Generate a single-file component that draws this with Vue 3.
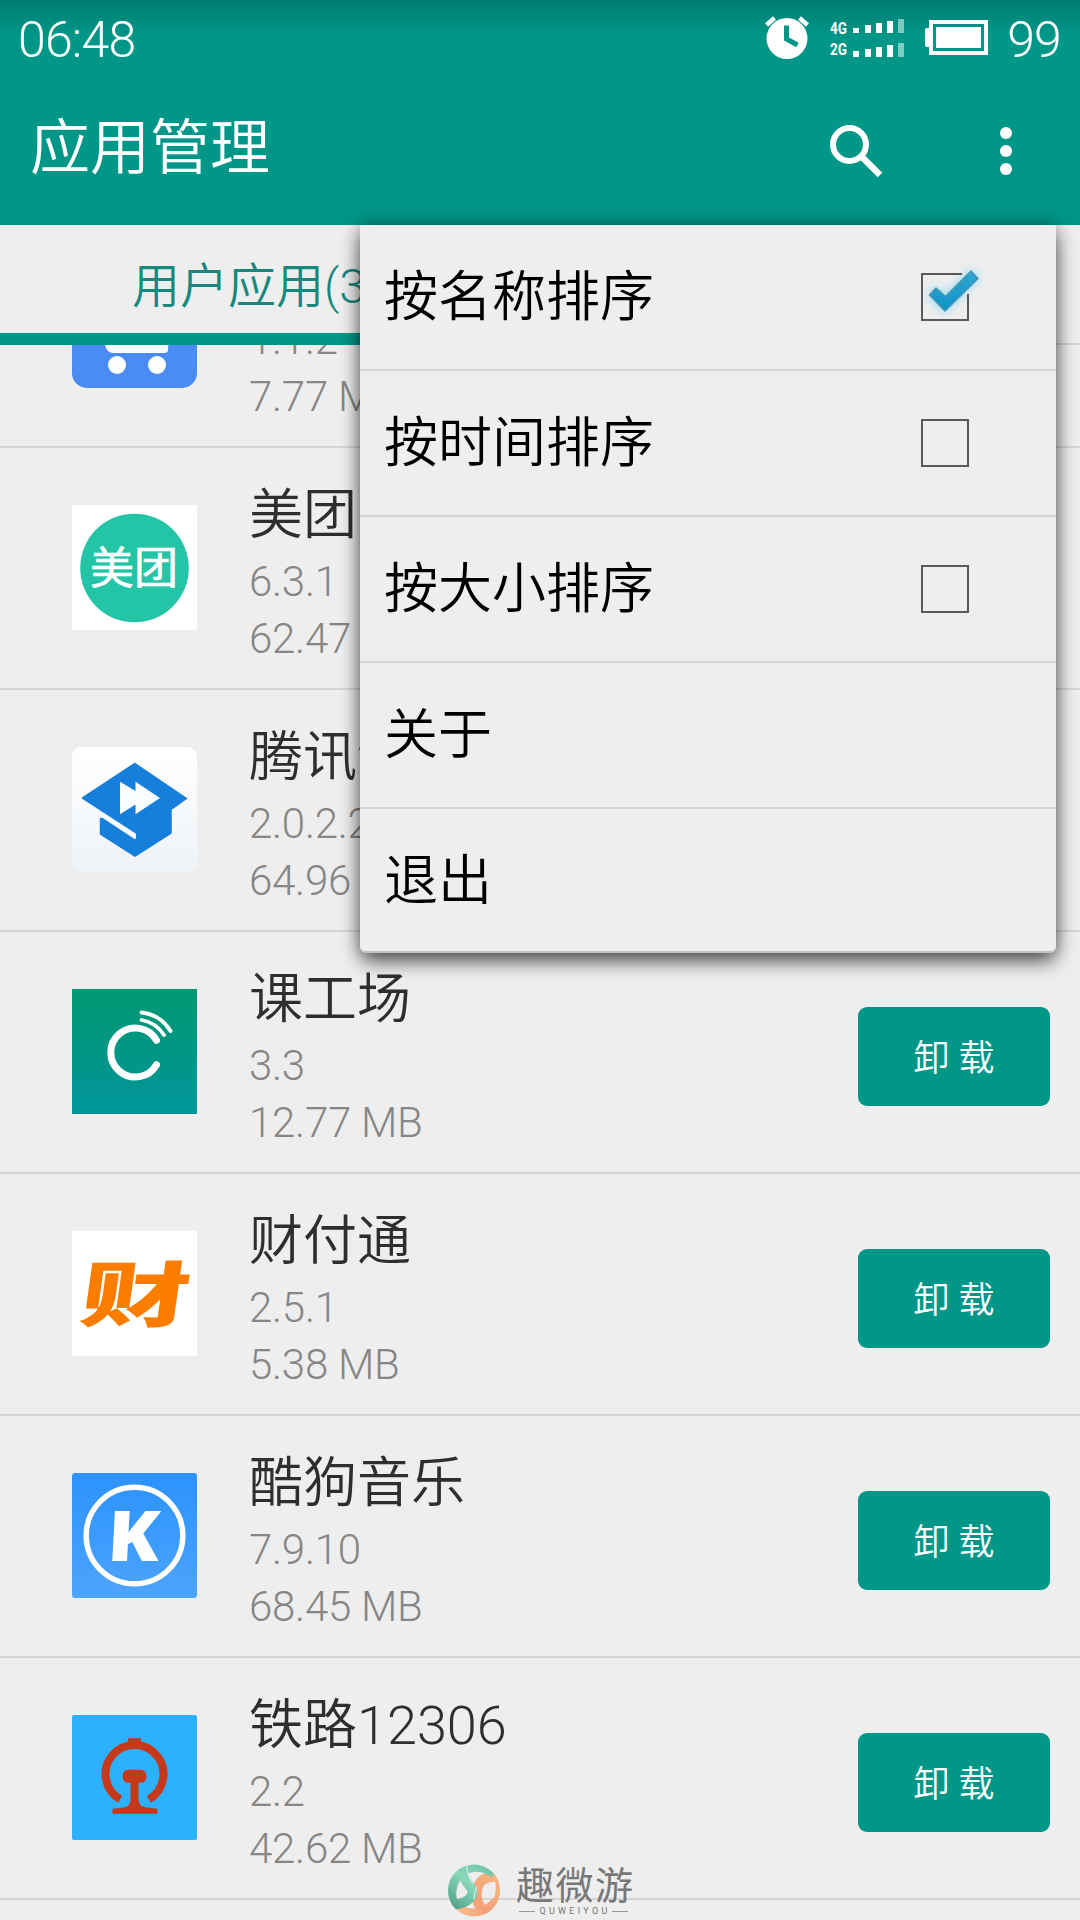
<script setup>
const apps = [
  { icon: 'cart', name: '', version: '1.1.2', size: '7.77 MB' },
  { icon: 'meituan', name: '美团', version: '6.3.1', size: '62.47 MB' },
  { icon: 'classroom', name: '腾讯课堂', version: '2.0.2.2', size: '64.96 MB' },
  { icon: 'kgc', name: '课工场', version: '3.3', size: '12.77 MB' },
  { icon: 'tenpay', name: '财付通', version: '2.5.1', size: '5.38 MB' },
  { icon: 'kugou', name: '酷狗音乐', version: '7.9.10', size: '68.45 MB' },
  { icon: 'railway', name: '铁路12306', version: '2.2', size: '42.62 MB' },
  { icon: '', name: '', version: '', size: '' },
]

const menu = [
  { label: '按名称排序', checkable: true, checked: true },
  { label: '按时间排序', checkable: true, checked: false },
  { label: '按大小排序', checkable: true, checked: false },
  { label: '关于' },
  { label: '退出' },
]
</script>

<template>
  <div class="screen">
    <header class="header">
      <div class="status">
        <span class="clock">06:48</span>
        <div class="status-icons">
          <svg class="alarm" width="46" height="46" viewBox="0 0 46 46">
            <path d="M2.5 10 10.5 3M35.500 3 43.500 10" stroke="#fff" stroke-width="4.500" />
            <circle cx="23" cy="23.500" r="20.500" fill="#fff" />
            <path d="M22.500 10.500V24L33.500 30" fill="none" stroke="#009688" stroke-width="5" />
          </svg>
          <svg class="signal" width="76" height="44" viewBox="0 0 76 44">
            <text class="net" x="0" y="18" textLength="17" lengthAdjust="spacingAndGlyphs">4G</text>
            <text class="net" x="0" y="39" textLength="17" lengthAdjust="spacingAndGlyphs">2G</text>
            <g fill="#fff">
              <path d="M23 12h6v5h-6zM35 9h6v8h-6zM46 7h6v10h-6zM57 5h6v12h-6z" />
              <path d="M23 35h6v6h-6zM35 33h6v8h-6zM46 31h6v10h-6zM57 29h6v12h-6z" />
              <path opacity=".5" d="M68 3h6v14h-6zM68 27h6v14h-6z" />
            </g>
          </svg>
          <svg class="battery" width="64" height="36" viewBox="0 0 64 36">
            <rect x="6" y="2" width="55" height="31" fill="none" stroke="#fff" stroke-width="4" />
            <path d="M0 10q0-2 2-2h3v19H2q-2 0-2-2zM11 7h45v21H11z" fill="#fff" />
          </svg>
          <span class="percent">99</span>
        </div>
      </div>
      <div class="toolbar">
        <h1 class="title">应用管理</h1>
        <svg class="search" width="54" height="54" viewBox="0 0 54 54" fill="none" stroke="#fff">
          <circle cx="20.500" cy="20.500" r="16.500" stroke-width="6" />
          <path d="M34 34 51 51" stroke-width="6.500" />
        </svg>
        <svg class="more" width="12" height="48" viewBox="0 0 12 48" fill="#fff">
          <circle cx="6" cy="6" r="6" /><circle cx="6" cy="24" r="6" /><circle cx="6" cy="42" r="6" />
        </svg>
      </div>
    </header>

    <nav class="tabs">
      <div class="tab active">用户应用(32)</div>
      <div class="tab"></div>
    </nav>

    <main class="list">
      <div v-for="(app, i) in apps" :key="i" class="row">
        <svg class="icon" width="125" height="125" viewBox="0 0 125 125">
          <template v-if="app.icon === 'cart'">
            <rect width="125" height="125" rx="15" fill="#4a8bf4" />
            <path d="M28 60h70l-2 27q0 3-4 3H41q-6 0-8-8z" fill="#fff" />
            <circle cx="45" cy="102" r="9" fill="#fff" />
            <circle cx="85" cy="102" r="9" fill="#fff" />
          </template>
          <template v-else-if="app.icon === 'meituan'">
            <rect width="125" height="125" rx="1" fill="#fff" />
            <circle cx="62.500" cy="63" r="54.300" fill="#24c5a6" />
            <text class="meituan" x="18" y="79" textLength="88">美团</text>
          </template>
          <template v-else-if="app.icon === 'classroom'">
            <defs>
              <linearGradient id="paper" x1="0" y1="0" x2="0" y2="1">
                <stop offset="0" stop-color="#fff" /><stop offset="1" stop-color="#eef3f8" />
              </linearGradient>
            </defs>
            <rect width="125" height="125" rx="9" fill="url(#paper)" />
            <path
              d="M10.500 51 63 16.500 114.500 51.500 99 62.500V86L63 109 28.500 87V72L30 71.500 62.500 93 64.500 92V86z"
              fill="#167fdb" stroke="#167fdb" stroke-width="1.500" stroke-linejoin="round"
            />
            <path d="M30 66 64 88V92L30 70z" fill="#f8feff" />
            <path d="M48 34.700 63.500 44V34.700L88 51 63.500 67.300V57.500L48 67.300z" fill="#f8feff" />
          </template>
          <template v-else-if="app.icon === 'kgc'">
            <defs>
              <linearGradient id="kgc" x1="0" y1="0" x2="0" y2="1">
                <stop offset="0" stop-color="#009871" /><stop offset="1" stop-color="#00959a" />
              </linearGradient>
            </defs>
            <rect width="125" height="125" fill="url(#kgc)" />
            <g fill="none" stroke="#fff" stroke-linecap="round">
              <path d="M84.500 51.300A24.500 24.500 0 1 0 84.500 75.700" stroke-width="7" />
              <path d="M69.500 31Q84 33.500 92 46M69.500 23.500Q89 26 98.500 42" stroke-width="3.800" />
            </g>
          </template>
          <template v-else-if="app.icon === 'tenpay'">
            <rect width="125" height="125" rx="1" fill="#fff" />
            <text class="tenpay" transform="translate(5.5 90) skewX(-8) scale(1.54 1)">财</text>
          </template>
          <template v-else-if="app.icon === 'kugou'">
            <defs>
              <linearGradient id="kugou" x1="0" y1="0" x2="0" y2="1">
                <stop offset="0" stop-color="#2b92fe" /><stop offset="1" stop-color="#4da4fc" />
              </linearGradient>
            </defs>
            <rect width="125" height="125" rx="3" fill="url(#kugou)" />
            <circle cx="62.500" cy="62.500" r="48.300" fill="none" stroke="#fff" stroke-width="5.500" />
            <text class="kugou" transform="translate(34.5 87.500) skewX(-3) scale(1.08 1)">K</text>
          </template>
          <template v-else-if="app.icon === 'railway'">
            <rect width="125" height="125" rx="2" fill="#2cb1ff" />
            <g fill="#c5391a" transform="translate(.5 .8)">
              <path d="M55.500 22.500h13v7h-13zM56 54h12q6 0 6 6.500t-6 6.500H66V84q0 6 7 7.500l12 1.500v5H40v-5l12-1.500q6-1.500 6-7.500V67h-2q-6 0-6-6.500t6-6.500z" />
              <path d="M47.700 83.500A29 29 0 1 1 76.300 83.500" fill="none" stroke="#c5391a" stroke-width="8" />
            </g>
          </template>
        </svg>
        <div class="info">
          <div class="name">{{ app.name }}</div>
          <div class="meta">{{ app.version }}</div>
          <div class="meta">{{ app.size }}</div>
        </div>
        <button v-if="app.name" class="uninstall">卸 载</button>
      </div>
    </main>

    <div class="menu">
      <div v-for="item in menu" :key="item.label" class="item">
        <span>{{ item.label }}</span>
        <svg v-if="item.checkable" class="check" width="96" height="96" viewBox="0 0 96 96">
          <rect v-if="!item.checked" x="25" y="25" width="46" height="46" fill="none" stroke="#5a5a5a" stroke-width="2" />
          <template v-else>
            <defs>
              <linearGradient id="tick" x1="0" y1="0" x2="0" y2="1">
                <stop offset="0" stop-color="#2fa6d3" /><stop offset="1" stop-color="#0e93c8" />
              </linearGradient>
              <filter id="glow" x="-40%" y="-40%" width="180%" height="180%"><feGaussianBlur stdDeviation="5" /></filter>
            </defs>
            <path d="M32.500 46 39 39 48 47.500 74 22 81 29 48 62z" fill="#7fd6f2" stroke="#7fd6f2" stroke-width="3" opacity=".8" filter="url(#glow)" />
            <path d="M65 25H25V71H71V45" fill="none" stroke="#5a5a5a" stroke-width="2" />
            <path d="M32.500 46 39 39 48.500 47.500 74 22 81 29.500 48 62z" fill="url(#tick)" stroke="#4b94b2" stroke-width="1.500" stroke-linejoin="round" />
          </template>
        </svg>
      </div>
    </div>

    <div class="watermark">
      <svg width="54" height="54" viewBox="0 0 54 54">
        <defs>
          <linearGradient id="mint" gradientUnits="userSpaceOnUse" x1="45" y1="0" x2="5" y2="45">
            <stop offset="0" stop-color="#6fbfa4" /><stop offset=".5" stop-color="#8ad8ba" /><stop offset="1" stop-color="#529f89" />
          </linearGradient>
          <linearGradient id="peach" gradientUnits="userSpaceOnUse" x1="52" y1="10" x2="10" y2="54">
            <stop offset="0" stop-color="#f9b77f" /><stop offset=".6" stop-color="#f3a078" /><stop offset="1" stop-color="#fac293" />
          </linearGradient>
          <clipPath id="disc"><circle cx="27" cy="27.500" r="26" /></clipPath>
        </defs>
        <g clip-path="url(#disc)" fill="none">
          <path d="M8 44Q18 52 29 51T51 38" stroke="url(#peach)" stroke-width="11" />
          <path d="M52 14Q32 12 30 28T42 52" stroke="url(#peach)" stroke-width="10" />
          <path d="M50 10Q54 26 49 40" stroke="url(#peach)" stroke-width="6" />
          <path d="M48 10Q34 0 20 5 5 12 4 28 3 38 8 43" stroke="url(#mint)" stroke-width="11" />
          <path d="M16 4Q15 14 22 22T22 36Q16 42 4 41" stroke="url(#mint)" stroke-width="10" />
          <path d="M20 1Q19 12 26 21M30 24Q27 30 27 36" stroke="#e6f3ee" stroke-width="1" />
        </g>
      </svg>
      <div class="brand">
        <div class="brand-name">趣微游</div>
        <div class="brand-sub"><i></i><span>QUWEIYOU</span><i></i></div>
      </div>
    </div>
  </div>
</template>

<style>
body {
  margin: 0;
  background: #eee;
}
</style>

<style scoped>
.screen {
  position: relative;
  width: 1080px;
  height: 1920px;
  overflow: hidden;
  background: #eee;
  color: #2e2e2e;
  font-family: Roboto, "Noto Sans CJK SC", sans-serif;
  font-weight: 350;
}
svg {
  display: block;
  flex: none;
}
.header {
  height: 225px;
  background: linear-gradient(rgba(0, 0, 0, 0.16), rgba(0, 0, 0, 0) 36px), #009688;
  color: #fff;
}
.status {
  display: flex;
  justify-content: space-between;
  height: 78px;
  padding: 0 19px 0 18px;
  font-size: 50px;
  font-weight: 300;
  line-height: 80px;
}
.clock,
.percent {
  letter-spacing: -0.8px;
}
.status-icons {
  display: flex;
}
.alarm {
  margin: 15px 20px 0 0;
}
.signal {
  margin: 16px 19px 0 0;
}
.battery {
  margin: 20px 18px 0 0;
}
.net {
  font: 700 17px Roboto, sans-serif;
  fill: #fff;
}
.toolbar {
  display: flex;
  align-items: center;
  height: 146px;
  padding: 0 68px 0 30px;
}
.title {
  flex: 1;
  margin: 0;
  font-size: 60px;
  font-weight: 350;
  line-height: 80px;
  padding-bottom: 5px;
}
.search {
  margin-right: 117px;
}
.tabs {
  display: flex;
  height: 120px;
}
.tab {
  box-sizing: border-box;
  width: 540px;
  padding-top: 1px;
  border-bottom: 2px solid #d4d4d4;
  font-size: 48px;
  line-height: 122px;
  text-align: center;
  color: #15897c;
}
.tab.active {
  border-bottom: 0;
  box-shadow: inset 0 -12px #009688;
}
.list {
  display: flex;
  flex-direction: column;
  height: 1575px;
  overflow: hidden;
}
.row {
  box-sizing: border-box;
  display: flex;
  flex: none;
  align-items: flex-start;
  height: 242px;
  padding-left: 72px;
  border-bottom: 2px solid #d4d4d4;
}
.row:first-child {
  margin-top: -139px;
}
.icon {
  margin: 57px 52px 0 0;
}
.info {
  flex: 1;
  padding-top: 30px;
  white-space: nowrap;
}
.name {
  height: 75px;
  font-size: 54px;
  line-height: 76px;
}
.meta {
  height: 57px;
  font-size: 42px;
  font-weight: 300;
  line-height: 57px;
  letter-spacing: -0.250px;
  color: #868686;
}
.uninstall {
  width: 192px;
  height: 99px;
  margin: 75px 30px 0 0;
  padding: 5px 0 0;
  border: 0;
  border-radius: 9px;
  background: #009688;
  color: #fff;
  font: inherit;
  font-size: 36px;
  line-height: 94px;
}
.meituan {
  font: 400 44px "Noto Sans CJK SC", sans-serif;
  fill: #fff;
  stroke: #fff;
  stroke-width: 0.6px;
}
.tenpay {
  font: 900 71px "Noto Sans CJK SC", sans-serif;
  fill: #fb7d00;
}
.kugou {
  font: 800 70px "Open Sans", sans-serif;
  fill: #fff;
}
.menu {
  position: absolute;
  top: 225px;
  left: 360px;
  box-sizing: border-box;
  width: 696px;
  height: 728px;
  border-bottom: 2px solid #c4c4c4;
  border-radius: 0 0 6px 6px;
  background: #eee;
  color: #000;
  box-shadow: 0 10px 20px -2px rgba(0, 0, 0, 0.6), 0 0 18px rgba(0, 0, 0, 0.35);
}
.item {
  box-sizing: border-box;
  display: flex;
  align-items: center;
  justify-content: space-between;
  height: 146px;
  padding: 1px 63px 1px 24px;
  border-bottom: 2px solid #d4d4d4;
  font-size: 54px;
  line-height: 70px;
}
.item span {
  padding-top: 1px;
}
.item:last-child {
  padding-bottom: 3px;
  border-bottom: 0;
}
.watermark {
  position: absolute;
  left: 447px;
  top: 1863px;
  display: flex;
}
.brand {
  width: 120px;
  margin-left: 15px;
  color: #777;
}
.brand-name {
  height: 42px;
  font-size: 38px;
  font-weight: 400;
  line-height: 47px;
  letter-spacing: 1.500px;
  white-space: nowrap;
}
.brand-sub {
  display: flex;
  align-items: center;
  justify-content: space-between;
  width: 109px;
  margin-left: 3px;
  font-size: 9px;
  line-height: 12px;
  font-weight: 400;
  letter-spacing: 3.300px;
}
.brand-sub span {
  margin-right: -3px;
}
.brand-sub i {
  width: 16px;
  height: 1px;
  background: #999;
}
</style>
